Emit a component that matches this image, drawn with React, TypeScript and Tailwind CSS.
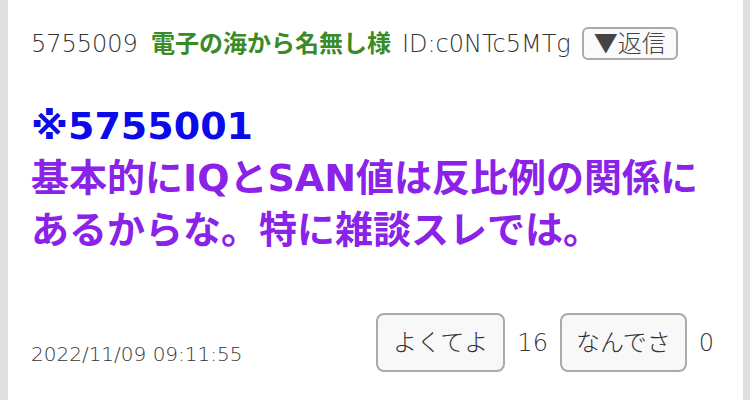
export default function App() {
  const font = { fontFamily: '"DejaVu Sans", "Noto Sans CJK JP", sans-serif' };
  return (
    <div className="flex h-[400px] w-[750px] bg-[#e0e0e0] pl-2 pr-[7px]" style={font}>
      <div className="flex flex-1 flex-col bg-white pl-[23px] pr-[29px] pt-[27px]">
        {/* header */}
        <div className="flex h-[33px] items-center text-[24px] leading-none text-[#333]">
          <span className="font-extralight">5755009</span>
          <span className="ml-[13px] font-bold text-[#3a8a26]">電子の海から名無し様</span>
          <span className="ml-[11px] font-extralight">ID:c0NTc5MTg</span>
          <span className="ml-[11px] flex h-[33px] items-center rounded-md border-2 border-[#aaa] bg-[#fafafa] px-[10px] text-[24px] font-extralight text-[#444]">
            ▼返信
          </span>
        </div>

        {/* body */}
        <div className="mt-[40px] text-[38px] font-bold leading-[52px]">
          <div className="text-[#0b0bea]">※5755001</div>
          <div className="text-[#8b22e8]">
            基本的にIQとSAN値は反比例の関係に
            <br />
            あるからな。特に雑談スレでは。
          </div>
        </div>

        {/* footer */}
        <div className="mt-auto mb-[28px] flex items-end justify-between">
          <span className="mb-[8px] text-[20px] font-extralight leading-none text-[#333]">2022/11/09 09:11:55</span>
          <div className="flex items-center gap-[12px] text-[24px] font-extralight text-[#333]">
            <span className="flex h-[59px] items-center rounded-lg border-2 border-[#aaa] bg-[#f8f8f8] px-[15px]">よくてよ</span>
            <span>16</span>
            <span className="flex h-[59px] items-center rounded-lg border-2 border-[#aaa] bg-[#f8f8f8] px-[14px]">なんでさ</span>
            <span>0</span>
          </div>
        </div>
      </div>
    </div>
  );
}
